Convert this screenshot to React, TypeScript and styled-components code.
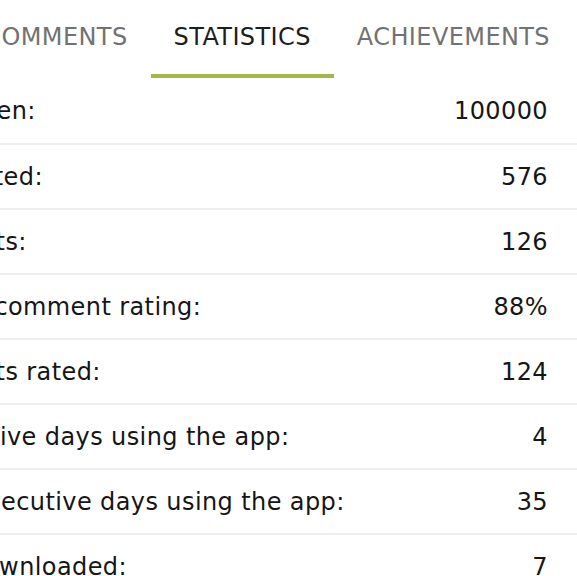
import React from "react";
import styled, { createGlobalStyle } from "styled-components";

const Global = createGlobalStyle`
  html, body { margin: 0; padding: 0; background: #fff; }
  body { font-family: "DejaVu Sans", "Noto Sans", sans-serif; overflow: hidden; }
`;

const Frame = styled.div`
  width: 577px;
  height: 576px;
  overflow: hidden;
`;

const Panel = styled.div`
  margin-left: -135px;
  width: calc(100% + 135px);
`;

const TabBar = styled.div`
  display: flex;
  justify-content: flex-end;
  padding-right: 4px;
`;

const Tab = styled.div<{ $active?: boolean }>`
  display: flex;
  align-items: center;
  height: 74px;
  padding: 0 23px;
  border-bottom: 4px solid ${(p) => (p.$active ? "#9fba4a" : "transparent")};
  font-size: 24px;
  letter-spacing: 0.4px;
  color: ${(p) => (p.$active ? "#1e1e1e" : "#727272")};
  white-space: nowrap;
`;

const List = styled.div``;

const Row = styled.div`
  display: flex;
  align-items: center;
  justify-content: space-between;
  height: 63px;
  padding: 0 29px 0 20px;
  border-bottom: 2px solid #eeeeee;
  font-size: 24px;
  letter-spacing: 0.4px;
  color: #161616;
  &:first-child { height: 65px; }
`;

const Label = styled.span`
  white-space: nowrap;
`;

const Value = styled.span`
  white-space: nowrap;
`;

const stats: [string, string][] = [
  ["Plants seen:", "100000"],
  ["Plants rated:", "576"],
  ["Comments:", "126"],
  ["Average comment rating:", "88%"],
  ["Comments rated:", "124"],
  ["Consecutive days using the app:", "4"],
  ["Max consecutive days using the app:", "35"],
  ["Plants downloaded:", "7"],
];

export default function App() {
  return (
    <>
      <Global />
      <Frame>
        <Panel>
          <TabBar>
            <Tab>COMMENTS</Tab>
            <Tab $active>STATISTICS</Tab>
            <Tab>ACHIEVEMENTS</Tab>
          </TabBar>
          <List>
            {stats.map(([l, v]) => (
              <Row key={l}>
                <Label>{l}</Label>
                <Value>{v}</Value>
              </Row>
            ))}
          </List>
        </Panel>
      </Frame>
    </>
  );
}
